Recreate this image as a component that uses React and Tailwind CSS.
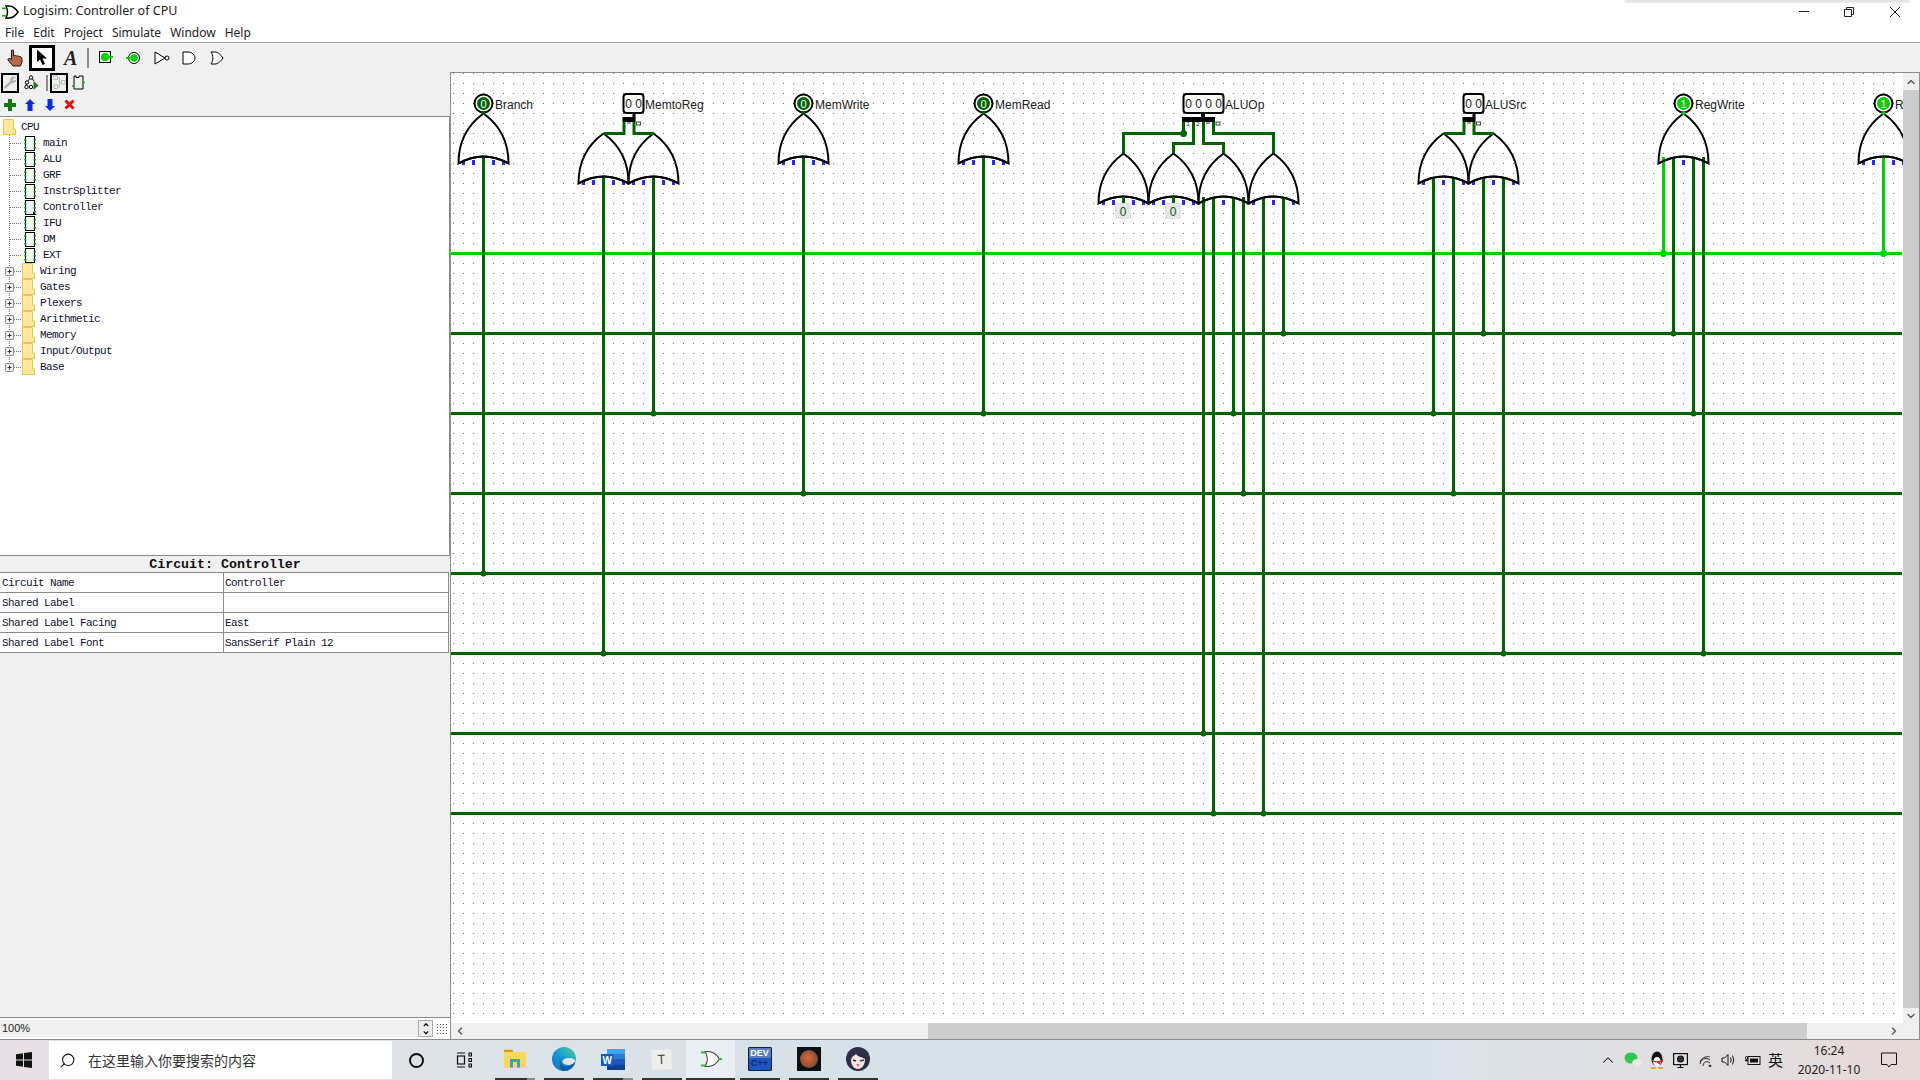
import React from "react";
import { ChevronLeft, ChevronRight, ChevronUp, ChevronDown, Search } from "lucide-react";

const DARK = "#006400";
const BRIGHT = "#00d200";
const BLUE = "#2a2aff";

const menus = ["File", "Edit", "Project", "Simulate", "Window", "Help"];

const tree = [
  { name: "main", kind: "circuit" },
  { name: "ALU", kind: "circuit" },
  { name: "GRF", kind: "circuit" },
  { name: "InstrSplitter", kind: "circuit" },
  { name: "Controller", kind: "current" },
  { name: "IFU", kind: "circuit" },
  { name: "DM", kind: "circuit" },
  { name: "EXT", kind: "circuit" },
  { name: "Wiring", kind: "lib" },
  { name: "Gates", kind: "lib" },
  { name: "Plexers", kind: "lib" },
  { name: "Arithmetic", kind: "lib" },
  { name: "Memory", kind: "lib" },
  { name: "Input/Output", kind: "lib" },
  { name: "Base", kind: "lib" },
];

const attrs = [
  ["Circuit Name", "Controller"],
  ["Shared Label", ""],
  ["Shared Label Facing", "East"],
  ["Shared Label Font", "SansSerif Plain 12"],
];

// circuit geometry, in page pixels
const buses = [333.5, 413.5, 493.5, 573.5, 653.5, 733.5, 813.5];
const LIVE = 253.5;

const drops = [
  [483.5, 157, 573.5],
  [603.5, 177, 653.5],
  [653.5, 177, 413.5],
  [803.5, 157, 493.5],
  [983.5, 157, 413.5],
  [1203.5, 197, 733.5],
  [1213.5, 197, 813.5],
  [1233.5, 197, 413.5],
  [1243.5, 197, 493.5],
  [1263.5, 197, 813.5],
  [1283.5, 197, 333.5],
  [1433.5, 177, 413.5],
  [1453.5, 177, 493.5],
  [1483.5, 177, 333.5],
  [1503.5, 177, 653.5],
  [1673.5, 157, 333.5],
  [1693.5, 157, 413.5],
  [1703.5, 157, 653.5],
];

const liveDrops = [1663.5, 1883.5];

const outputs = [
  { x: 483.5, label: "Branch", value: "0" },
  { x: 803.5, label: "MemWrite", value: "0" },
  { x: 983.5, label: "MemRead", value: "0" },
  { x: 1683.5, label: "RegWrite", value: "1" },
  { x: 1883.5, label: "R", value: "1" },
];

const gates = [
  [483.5, 113.5], [803.5, 113.5], [983.5, 113.5], [1683.5, 113.5], [1883.5, 113.5],
  [603.5, 133.5], [653.5, 133.5], [1443.5, 133.5], [1493.5, 133.5],
  [1123.5, 153.5], [1173.5, 153.5], [1223.5, 153.5], [1273.5, 153.5],
];

const Gate = ({ c, top }) => (
  <g>
    {[-20, -10, 0, 10, 20].map((d) => (
      <rect key={d} x={c + d - 1.5} y={top + 46.5} width="3" height="5" fill={BLUE} />
    ))}
    <path
      d={`M${c} ${top} C${c - 14} ${top + 10} ${c - 25} ${top + 26} ${c - 25} ${top + 50} Q${c} ${top + 36} ${c + 25} ${top + 50} C${c + 25} ${top + 26} ${c + 14} ${top + 10} ${c} ${top}`}
      fill="none"
      stroke="#000"
      strokeWidth="2"
    />
  </g>
);

const OutputPin = ({ x, label, value }) => {
  const color = value === "1" ? BRIGHT : DARK;
  return (
    <g>
      <circle cx={x} cy="103.5" r="9" fill="#fff" stroke="#000" strokeWidth="2" />
      <circle cx={x} cy="103.5" r="6.5" fill={color} />
      <text x={x} y="107.5" textAnchor="middle" fontSize="11" fill="#fff" fontFamily="Liberation Sans">{value}</text>
      <circle cx={x} cy="113" r="2" fill={color} />
      <text x={x + 11.5} y="109" fontSize="12" fill="#222" fontFamily="Liberation Sans">{label}</text>
    </g>
  );
};

const InputPin = ({ x, bits, label }) => (
  <g>
    <rect x={x} y="94" width={bits * 10} height="19" rx="3" fill="#fff" stroke="#000" strokeWidth="2" />
    {Array.from({ length: bits }).map((_, i) => (
      <text key={i} x={x + 5 + i * 10} y="108" textAnchor="middle" fontSize="12" fill="#222" fontFamily="Liberation Sans">0</text>
    ))}
    <text x={x + bits * 10 + 1.5} y="109" fontSize="12" fill="#222" fontFamily="Liberation Sans">{label}</text>
  </g>
);

const TwoBitSplit = ({ x }) => (
  <g>
    <rect x={x - 1} y="117" width="13" height="5" fill="#000" />
    <rect x={x + 9} y="113" width="3" height="5" fill="#000" />
    <path d={`M${x + 0.5} 122 V133.5 H${x - 20} M${x + 10.5} 122 V133.5 H${x + 30.5}`} fill="none" stroke={DARK} strokeWidth="3" />
    <rect x={x + 3.5} y="122.5" width="4" height="1" fill="#444" />
    <rect x={x + 13} y="122" width="4" height="3" fill="#fff" stroke="#444" strokeWidth="1" />
  </g>
);

const Circuit = () => (
  <svg className="block h-full flex-1" viewBox="451 73 1452 950" preserveAspectRatio="xMinYMin slice">
    <defs>
      <pattern id="grid" x="453" y="73" width="10" height="10" patternUnits="userSpaceOnUse">
        <rect x="0" y="0" width="1" height="1" fill="#7a7a7a" />
      </pattern>
    </defs>
    <rect x="451" y="73" width="1452" height="950" fill="#fff" />
    <rect x="451" y="73" width="1452" height="950" fill="url(#grid)" />

    {gates.map(([c, top]) => <Gate key={c} c={c} top={top} />)}

    {buses.map((y) => <rect key={y} x="451" y={y - 1.5} width="1451" height="3" fill={DARK} />)}
    <rect x="451" y={LIVE - 1.5} width="1451" height="3" fill={BRIGHT} />

    {drops.map(([x, y1, y2]) => (
      <g key={x}>
        <rect x={x - 1.5} y={y1} width="3" height={y2 - y1} fill={DARK} />
        <circle cx={x} cy={y2} r="3" fill={DARK} />
      </g>
    ))}
    {liveDrops.map((x) => (
      <g key={x}>
        <rect x={x - 1.5} y="157" width="3" height={LIVE - 157} fill={BRIGHT} />
        <circle cx={x} cy={LIVE} r="3.5" fill={BRIGHT} />
      </g>
    ))}

    {gates.map(([c, top]) => (
      <path
        key={c}
        d={`M${c - 25} ${top + 50} Q${c} ${top + 36} ${c + 25} ${top + 50}`}
        fill="none"
        stroke="#000"
        strokeWidth="2"
      />
    ))}

    {outputs.map((p) => <OutputPin key={p.x} {...p} />)}

    <InputPin x={623.5} bits={2} label="MemtoReg" />
    <TwoBitSplit x={623.5} />
    <InputPin x={1463.5} bits={2} label="ALUSrc" />
    <TwoBitSplit x={1463.5} />

    <InputPin x={1183.5} bits={4} label="ALUOp" />
    <rect x="1182" y="117" width="33" height="5" fill="#000" />
    <rect x="1201" y="113" width="4" height="5" fill="#000" />
    <path
      d="M1183.5 122 V133.5 H1123.5 V153 M1193.5 122 V143.5 H1173.5 V153 M1203.5 122 V143.5 H1223.5 V153 M1213.5 122 V133.5 H1273.5 V153"
      fill="none"
      stroke={DARK}
      strokeWidth="3"
    />
    <circle cx="1183.5" cy="133.5" r="3.5" fill={DARK} />
    {[1188, 1198].map((x, i) => (
      <text key={x} x={x} y="126" textAnchor="middle" fontSize="6" fill="#333" fontFamily="Liberation Sans">{3 - i}</text>
    ))}
    <rect x="1206" y="122.5" width="4" height="1" fill="#444" />
    <rect x="1216" y="122" width="4" height="3" fill="#fff" stroke="#444" strokeWidth="1" />

    {[1123.5, 1173.5].map((c) => (
      <g key={c}>
        <rect x={c - 1.5} y="197" width="3" height="7" fill={DARK} />
        <rect x={c - 8.5} y="203" width="16" height="16" fill="#e6e6e6" />
        <text x={c - 0.5} y="215.5" textAnchor="middle" fontSize="12" fill={DARK} fontFamily="Liberation Sans">0</text>
      </g>
    ))}
  </svg>
);

const LogisimLogo = ({ size = 18 }) => (
  <svg width={size} height={size} viewBox="0 0 18 18">
    <path d="M5 3 H8 C12 3 15 6 17 9 C15 12 12 15 8 15 H5 C7 11 7 7 5 3 Z" fill="#fff" stroke="#000" strokeWidth="1.4" />
    <rect x="1" y="4.5" width="4" height="1.6" fill="#00c000" />
    <rect x="1" y="12" width="4" height="1.6" fill="#00c000" />
  </svg>
);

const HandTool = () => (
  <svg width="16" height="18" viewBox="0 0 16 18">
    <path d="M4.5 1.5 C4.5 0.5 6.5 0.5 6.5 1.5 V7 C7.5 6 9 6.3 9.5 7 C10.5 6.4 11.5 6.8 12 7.6 C13 7.2 15 8 15 9.5 V13 L13.5 17 H6 L1 11 C0.5 9.5 2.5 8.8 4.5 10.5 Z" fill="#b5684a" stroke="#2a1a12" strokeWidth="1" />
  </svg>
);

const ArrowTool = () => (
  <svg width="12" height="17" viewBox="0 0 12 17">
    <path d="M1 0.5 V13 L4 10.5 L6.5 16 L9 15 L6.5 9.5 H11 Z" fill="#000" />
  </svg>
);

const PinIn = () => (
  <svg width="14" height="14" viewBox="0 0 14 14">
    <rect x="0.5" y="0.5" width="11" height="11" fill="#fff" stroke="#000" />
    <circle cx="6" cy="6" r="4" fill="#00d200" />
    <rect x="9" y="5" width="5" height="2" fill="#00d200" />
  </svg>
);

const PinOut = () => (
  <svg width="14" height="14" viewBox="0 0 14 14">
    <circle cx="8" cy="7" r="5.5" fill="#fff" stroke="#000" />
    <circle cx="8" cy="7" r="3.8" fill="#00d200" />
    <rect x="0" y="6" width="4" height="2" fill="#00d200" />
  </svg>
);

const NotGate = () => (
  <svg width="16" height="14" viewBox="0 0 16 14">
    <path d="M1 1 L11 7 L1 13 Z" fill="#fff" stroke="#000" />
    <circle cx="13" cy="7" r="2" fill="#fff" stroke="#000" />
  </svg>
);

const AndGate = () => (
  <svg width="14" height="14" viewBox="0 0 14 14">
    <path d="M1 1 H6 C10 1 13 4 13 7 C13 10 10 13 6 13 H1 Z" fill="#fff" stroke="#000" />
  </svg>
);

const OrGate = () => (
  <svg width="14" height="14" viewBox="0 0 14 14">
    <path d="M1 1 H5 C8 1 11 4 13 7 C11 10 8 13 5 13 H1 C3.5 9.5 3.5 4.5 1 1 Z" fill="#fff" stroke="#000" />
  </svg>
);

const Wrench = () => (
  <svg width="15" height="15" viewBox="0 0 15 15">
    <path d="M14 1.5 L10.5 1 C8 1.5 7 4 7.8 6 L1 12 C0.5 13 2 14.8 3 14 L9.5 8 C12 8.5 14 7 14.5 4 L12 5.5 L10.5 4 Z" fill="#b4b4b4" />
  </svg>
);

const SimTree = () => (
  <svg width="15" height="15" viewBox="0 0 15 15" fill="none">
    <path d="M7 2 L3 7 L2 11 M7 2 L10 6" stroke="#000" />
    <circle cx="7" cy="2.5" r="1.7" fill="#fff" stroke="#000" />
    <circle cx="3" cy="7.5" r="1.7" fill="#fff" stroke="#000" />
    <circle cx="2.5" cy="12" r="1.7" fill="#fff" stroke="#000" />
    <circle cx="7" cy="12" r="1.7" fill="#fff" stroke="#000" />
    <path d="M9.5 6 L14.5 10.5 L9.5 15 Z" fill="#1f7a1f" />
  </svg>
);

const Layout = () => (
  <svg width="13" height="15" viewBox="0 0 13 15" fill="none">
    <rect x="1" y="1" width="3.5" height="3.5" stroke="#bbb" />
    <rect x="1" y="10" width="3.5" height="3.5" stroke="#bbb" />
    <rect x="8.5" y="5.5" width="3.5" height="3.5" stroke="#bbb" />
    <path d="M4.5 3 H6.5 V12 H4.5 M6.5 7 H8.5" stroke="#9c9" />
  </svg>
);

const Appearance = () => (
  <svg width="13" height="15" viewBox="0 0 13 15" fill="none">
    <path d="M2 1 H4 V2.5 H7 V1 H11 V14 H2 Z" stroke="#000" />
    <path d="M0 11 H3 M10 7.5 H13" stroke="#00c000" strokeWidth="1.5" />
  </svg>
);

const Folder = () => (
  <svg width="13" height="16" viewBox="0 0 13 16" className="shrink-0">
    <path d="M0.5 0.5 H10.5 V10 H12.5 V15.5 H0.5 Z" fill="#fde79a" stroke="#e9c450" />
  </svg>
);

const CircuitIcon = ({ current }) => (
  <svg width="13" height="15" viewBox="0 0 13 15" className="shrink-0">
    <rect x="1.5" y="0.5" width="9" height="14" fill={current ? "#eef" : "#fff"} stroke="#000" />
    {[3, 7, 11].map((y) => (
      <g key={y}>
        <rect x="0" y={y} width="2.5" height="1.5" fill="#00c000" />
        <rect x="9.5" y={y} width="2.5" height="1.5" fill="#00a000" />
      </g>
    ))}
    {current && <path d="M9 12 L13 15 H9 Z" fill="#000" />}
  </svg>
);

const TreeGuide = ({ lib, last }) => (
  <svg width="22" height="16" viewBox="0 0 22 16" className="shrink-0" fill="none">
    <path d={`M9.5 0 V${last ? 8 : 16} M10 8.5 H22`} stroke="#777" strokeDasharray="1 1" />
    {lib && (
      <g>
        <rect x="5.5" y="4.5" width="8" height="8" rx="1" fill="#eee" stroke="#888" />
        <path d="M7.5 8.5 H11.5 M9.5 6.5 V10.5" stroke="#334" />
      </g>
    )}
  </svg>
);

const TreeRow = ({ name, kind }) => (
  <div className="flex h-4 items-center">
    <TreeGuide lib={kind === "lib"} last={name === "Base"} />
    {kind === "lib" ? (
      <Folder />
    ) : (
      <span className="ml-[2px] flex items-center"><CircuitIcon current={kind === "current"} /></span>
    )}
    <span className={kind === "lib" ? "ml-[5px]" : "ml-[6px]"}>{name}</span>
  </div>
);

const WinLogo = () => (
  <svg width="16" height="16" viewBox="0 0 16 16" fill="#111">
    <path d="M0 2.3 L7 1.3 V7.5 H0 Z M8 1.1 L16 0 V7.5 H8 Z M0 8.5 H7 V14.7 L0 13.7 Z M8 8.5 H16 V16 L8 14.9 Z" />
  </svg>
);

const TaskView = () => (
  <svg width="16" height="16" viewBox="0 0 16 16" fill="none" stroke="#111" strokeWidth="1.2">
    <path d="M1 1 H9 M1 15 H9" />
    <rect x="1.5" y="4" width="7" height="8" />
    <path d="M13 1 H15.5 V4 H13 Z M13 6.5 H15.5 V9.5 H13 Z M13 12 H15.5 V15 H13 Z" />
  </svg>
);

const Explorer = () => (
  <svg width="22" height="20" viewBox="0 0 22 20">
    <path d="M0 2 C0 1 1 0.5 2 0.5 H8 L10 3 H22 V19 H0 Z" fill="#fbd760" />
    <path d="M0 0.8 H8 L9.5 3 H0 Z" fill="#d69a1a" />
    <path d="M6 18.5 V10 H16 V18.5 H13 V13 H9 V18.5 Z" fill="#3f9be0" />
  </svg>
);

const Edge = () => (
  <svg width="24" height="24" viewBox="0 0 24 24">
    <defs>
      <linearGradient id="edgeA" x1="0" y1="1" x2="1" y2="0">
        <stop offset="0" stopColor="#1565c0" />
        <stop offset="0.55" stopColor="#1ba1d8" />
        <stop offset="1" stopColor="#4fd07a" />
      </linearGradient>
    </defs>
    <circle cx="12" cy="12" r="12" fill="url(#edgeA)" />
    <ellipse cx="17" cy="14.5" rx="6.5" ry="3.6" fill="#dfe6ec" />
    <path d="M10 21 C7 17 8 11 13 10 C9 10 7 14 8 18 C8.5 20 9 21 10 21 Z" fill="#0f5da8" />
    <path d="M9 15 C9 19 14 20 18 18.2 C20 17.5 22 16 23 14.5 C23 19 18 24 12 24 C10 24 8 22 8 19 Z" fill="#0f5da8" />
  </svg>
);

const Word = () => (
  <svg width="24" height="21" viewBox="0 0 24 21">
    <rect x="6" y="0" width="18" height="21" fill="#2b7cd3" />
    <rect x="6" y="0" width="18" height="5" fill="#41a5ee" />
    <rect x="6" y="10" width="18" height="5.5" fill="#185abd" />
    <rect x="6" y="15.5" width="18" height="5.5" fill="#103f91" />
    <rect x="0" y="5" width="12.5" height="12" fill="#185abd" />
    <text x="6.2" y="14.5" textAnchor="middle" fontSize="10" fontWeight="700" fill="#fff" fontFamily="Liberation Sans">W</text>
  </svg>
);

const NoteT = () => (
  <div className="flex h-[19px] w-[19px] rotate-[-3deg] items-center justify-center bg-[#f0eeeb] text-[13px] text-[#444] shadow-[0_0_1px_#fff]">T</div>
);

const LogisimTask = () => (
  <svg width="22" height="18" viewBox="0 0 22 18">
    <path d="M5 1.5 H9 C13 2 17 5 19.5 9 C17 13 13 16 9 16.5 H5 C8 12 8 6 5 1.5 Z" fill="#fff" stroke="#444" strokeWidth="1.2" />
    <rect x="1" y="1.5" width="4.5" height="2" fill="#1fc61f" />
    <rect x="1" y="14.5" width="4.5" height="2" fill="#1fc61f" />
    <rect x="19" y="8" width="3" height="2" fill="#1fc61f" />
  </svg>
);

const DevCpp = () => (
  <div className="flex h-6 w-6 flex-col overflow-hidden rounded-[1px] border border-[#123] bg-[#1f56c4] text-center font-['Liberation_Sans',sans-serif] text-[9px] font-bold leading-[10px]">
    <span className="bg-[#5c7fb8] text-white">DEV</span>
    <span className="text-[#0b2a66]">C++</span>
  </div>
);

const Photo = () => (
  <div className="flex h-6 w-6 items-center justify-center bg-[#0b1014]">
    <div className="h-[18px] w-[18px] rounded-full bg-[radial-gradient(circle_at_45%_45%,#d9683a,#7c4a38_75%,#33424c)]" />
  </div>
);

const Avatar = () => (
  <svg width="24" height="24" viewBox="0 0 24 24">
    <circle cx="12" cy="12" r="12" fill="#2c2f45" />
    <path d="M5 13 C6 9 8 9 10 7 C12 10 16 10 19 12 C19 18 16 22 12 22 C8 22 5 18 5 13 Z" fill="#f5e3dc" />
    <path d="M7 13 L10 14 M14 14 L18 13" stroke="#263a6e" strokeWidth="1.5" />
    <path d="M10 17 H14 L12 20 Z" fill="#e7707a" />
  </svg>
);

const taskItems = [
  { icon: <Explorer />, bar: "explorer" },
  { icon: <Edge /> },
  { icon: <Word />, bar: "word" },
  { icon: <NoteT /> },
  { icon: <LogisimTask />, active: true },
  { icon: <DevCpp /> },
  { icon: <Photo /> },
  { icon: <Avatar /> },
];

const TaskItem = ({ icon, bar, active }) => (
  <div className={`flex h-10 w-[49px] flex-col items-center ${active ? "bg-[#e8eef3]" : ""}`}>
    <div className="flex flex-1 items-center justify-center">{icon}</div>
    <div className={`flex h-[2px] ${active ? "w-[49px]" : "w-10"} bg-[#333]`}>
      {bar && <span className={`ml-auto h-full ${bar === "word" ? "w-[10px]" : "w-2"} bg-[#8a8a8a]`} />}
    </div>
  </div>
);

const Tray = () => (
  <div className="flex items-center">
    <ChevronUp size={18} strokeWidth={1.4} className="text-[#222]" />
    <svg className="ml-[7px]" width="18" height="16" viewBox="0 0 18 16">
      <ellipse cx="7" cy="6" rx="6.5" ry="5.5" fill="#2dc84d" />
      <ellipse cx="13" cy="11" rx="4.8" ry="4" fill="#e9e9e9" />
    </svg>
    <svg className="ml-[7px]" width="16" height="18" viewBox="0 0 16 18">
      <ellipse cx="8" cy="8" rx="5.5" ry="7.5" fill="#111" />
      <ellipse cx="8" cy="11" rx="3.8" ry="5" fill="#fff" />
      <path d="M2 8.5 Q8 12 14 8.5 L14 11 L11 10.8 L11.5 14 L8 11.5 Q4 11 2 8.5 Z" fill="#d8232a" />
      <ellipse cx="4.5" cy="17" rx="3" ry="1" fill="#f0a020" />
      <ellipse cx="11.5" cy="17" rx="3" ry="1" fill="#f0a020" />
    </svg>
    <svg className="ml-[8px]" width="15" height="15" viewBox="0 0 15 15" fill="none" stroke="#111" strokeWidth="1.2">
      <rect x="0.6" y="0.6" width="13.8" height="11" />
      <circle cx="7.5" cy="6" r="3" fill="#333" />
      <path d="M7.5 12 V14.5 M4.5 14.5 H10.5" />
    </svg>
    <svg className="ml-[11px]" width="13" height="13" viewBox="0 0 13 13" fill="none" stroke="#333" strokeWidth="1">
      <path d="M1 8 A8 8 0 0 1 11 3 M1 10 A6 6 0 0 1 11 6 M4 12 A4 4 0 0 1 11 9" />
      <circle cx="11" cy="12" r="1" fill="#333" />
    </svg>
    <svg className="ml-[9px]" width="16" height="14" viewBox="0 0 16 14" fill="none" stroke="#111">
      <path d="M1 5 H3.5 L7 1.5 V12.5 L3.5 9 H1 Z M9.5 4.5 Q11 7 9.5 9.5 M11.5 2.5 Q14 7 11.5 11.5" />
    </svg>
    <svg className="ml-[8px]" width="16" height="11" viewBox="0 0 16 11">
      <rect x="3" y="1.5" width="12" height="8" fill="none" stroke="#111" />
      <rect x="5" y="3.5" width="8" height="4" fill="#111" />
      <path d="M0 5.5 H3" stroke="#111" strokeWidth="1.5" />
      <circle cx="1.5" cy="3" r="1.4" fill="none" stroke="#111" />
    </svg>
    <span className="ml-[7px] font-['Noto_Sans_CJK_SC',sans-serif] text-[15px] text-[#111]">英</span>
  </div>
);

const App = () => {
  return (
    <div className="relative flex h-[1080px] w-[1920px] flex-col overflow-hidden bg-white font-['Noto_Sans','Noto_Sans_CJK_SC',sans-serif] text-black">
      {/* title bar */}
      <div className="flex h-[23px] items-center pl-[1px]">
        <LogisimLogo />
        <span className="ml-[4px] text-[12.5px] text-[#222]">Logisim: Controller of CPU</span>
        <div className="ml-auto flex items-center text-[#222]">
          <span className="h-[1px] w-[10px] bg-[#222]" />
          <svg className="ml-[35px]" width="10" height="10" viewBox="0 0 10 10" fill="none" stroke="#222">
            <path d="M2.5 2.5 V0.5 H9.5 V7.5 H7.5 M0.5 2.5 H7.5 V9.5 H0.5 Z" />
          </svg>
          <svg className="ml-[36px] mr-[20px]" width="10" height="10" viewBox="0 0 10 10" fill="none" stroke="#222">
            <path d="M0 0 L10 10 M10 0 L0 10" />
          </svg>
        </div>
      </div>

      {/* menu */}
      <div className="flex h-[20px] items-center gap-[9px] border-b border-[#a0a0a0] px-[5px] text-[12px] text-[#222]">
        {menus.map((m) => <span key={m}>{m}</span>)}
      </div>

      {/* main toolbar */}
      <div className="flex h-[29px] items-center bg-[#f0f0f0] pl-[7px]">
        <HandTool />
        <div className="ml-[6px] flex h-[26px] w-[26px] items-center justify-center border-[3px] border-black bg-white"><ArrowTool /></div>
        <span className="ml-[9px] font-['Liberation_Serif',serif] text-[20px] font-bold italic leading-none text-[#222]">A</span>
        <span className="ml-[10px] h-[20px] w-[2px] bg-[#8c8c8c]" />
        <span className="ml-[10px]"><PinIn /></span>
        <span className="ml-[13px]"><PinOut /></span>
        <span className="ml-[14px]"><NotGate /></span>
        <span className="ml-[12px]"><AndGate /></span>
        <span className="ml-[14px]"><OrGate /></span>
      </div>

      <div className="flex min-h-0 flex-1 border-b border-[#8c8c8c]">
        {/* left panel */}
        <div className="flex w-[450px] shrink-0 flex-col bg-[#f0f0f0]">
          <div className="flex h-[21px] items-center pl-[1px]">
            <div className="flex h-[20px] w-[18px] items-center justify-center border-[2px] border-black"><Wrench /></div>
            <span className="ml-[5px]"><SimTree /></span>
            <span className="ml-[7px] h-[16px] w-[2px] bg-[#8c8c8c]" />
            <div className="ml-[2px] flex h-[20px] w-[18px] items-center justify-center border-[2px] border-black"><Layout /></div>
            <span className="ml-[4px]"><Appearance /></span>
          </div>
          <div className="flex h-[23px] items-center pl-[4px]">
            <svg width="12" height="12" viewBox="0 0 12 12"><path d="M4 0 H8 V4 H12 V8 H8 V12 H4 V8 H0 V4 H4 Z" fill="#0f7a0f" /></svg>
            <svg className="ml-[9px]" width="10" height="12" viewBox="0 0 10 12"><path d="M5 0 L10 5 H7.5 V12 H2.5 V5 H0 Z" fill="#0a2ce0" /></svg>
            <svg className="ml-[10px]" width="10" height="12" viewBox="0 0 10 12"><path d="M5 12 L10 7 H7.5 V0 H2.5 V7 H0 Z" fill="#0a2ce0" /></svg>
            <svg className="ml-[9px]" width="11" height="11" viewBox="0 0 11 11"><path d="M1.5 1.5 L9.5 9.5 M9.5 1.5 L1.5 9.5" stroke="#e01010" strokeWidth="3" /></svg>
          </div>

          {/* project tree */}
          <div className="h-[440px] border-y border-r border-[#8c8c8c] bg-white pt-[2px] font-['Liberation_Mono',monospace] text-[11px] tracking-[-0.6px] text-[#101030]">
            <div className="flex h-4 items-center pl-[3px]">
              <Folder />
              <span className="ml-[5px]">CPU</span>
            </div>
            {tree.map((row) => <TreeRow key={row.name} {...row} />)}
          </div>

          {/* attributes */}
          <div className="flex h-[16px] items-center justify-center pt-[2px] font-['Liberation_Mono',monospace] text-[13.3px] font-bold text-[#111]">
            Circuit: Controller
          </div>
          <div className="w-[449px] border-t border-[#8c8c8c] font-['Liberation_Mono',monospace] text-[11px] tracking-[-0.6px] text-[#101030]">
            {attrs.map(([k, v]) => (
              <div key={k} className="flex h-[20px] items-center border-b border-r border-[#8c8c8c] bg-white">
                <span className="flex h-full w-[224px] items-center border-r border-[#8c8c8c] pl-[2px] pt-[2px]">{k}</span>
                <span className="pl-[1px] pt-[2px]">{v}</span>
              </div>
            ))}
          </div>
          <div className="flex-1 border-b border-[#8c8c8c]" />

          {/* zoom */}
          <div className="flex h-[21px] items-center bg-white py-[2px]">
            <div className="flex h-full w-[418px] items-center bg-[#f0f0f0] pl-[2px] font-['Liberation_Sans',sans-serif] text-[11px] text-[#222]">100%</div>
            <div className="flex h-full w-[15px] flex-col border border-[#aaa] bg-[#eee] text-[#111]">
              <ChevronUp size={8} strokeWidth={4} className="mx-auto flex-1" />
              <ChevronDown size={8} strokeWidth={4} className="mx-auto flex-1" />
            </div>
            <div className="ml-[4px] grid grid-cols-4 gap-[2px]">
              {Array.from({ length: 16 }).map((_, i) => <span key={i} className="h-[1px] w-[1px] bg-[#555]" />)}
            </div>
          </div>
        </div>

        {/* canvas and scrollbars */}
        <div className="flex min-w-0 flex-1 flex-col border-l border-t border-[#8c8c8c] bg-[#f0f0f0]">
          <div className="flex h-[950px]">
            <div className="flex flex-1 overflow-hidden"><Circuit /></div>
            <div className="flex w-[17px] flex-col border-r border-[#8c8c8c] bg-[#f0f0f0] text-[#606060]">
              <div className="flex h-[17px] items-center justify-center"><ChevronUp size={12} strokeWidth={3} /></div>
              <div className="flex-1 bg-[#cdcdcd]" />
              <div className="flex h-[15px] items-center justify-center"><ChevronDown size={12} strokeWidth={3} /></div>
            </div>
          </div>
          <div className="flex h-[16px] items-center border-r border-[#8c8c8c] text-[#606060]">
            <ChevronLeft size={12} strokeWidth={3} className="ml-[3px] shrink-0" />
            <div className="ml-[462px] h-full w-[879px] bg-[#cdcdcd]" />
            <ChevronRight size={12} strokeWidth={3} className="ml-auto mr-[19px] shrink-0" />
          </div>
        </div>
      </div>

      {/* taskbar */}
      <div className="flex h-10 items-center bg-[linear-gradient(90deg,#e7dfe3_0%,#dde3e8_25%,#d6e0e8_50%,#dbe3ea_75%,#e6d9d8_100%)]">
        <div className="flex w-[47px] justify-center"><WinLogo /></div>
        <div className="ml-[2px] flex h-[38px] w-[343px] items-center bg-white pl-[10px] font-['Noto_Sans_CJK_SC',sans-serif] text-[14px] text-[#333]">
          <Search size={17} strokeWidth={1.5} className="-scale-x-100 text-[#111]" />
          <span className="ml-[12px]">在这里输入你要搜索的内容</span>
        </div>
        <div className="flex w-[49px] justify-center">
          <span className="h-[15px] w-[15px] rounded-full border-[2.5px] border-[#111]" />
        </div>
        <div className="flex w-[46px] justify-center"><TaskView /></div>
        <div className="w-[3px]" />
        {taskItems.map((t, i) => <TaskItem key={i} {...t} />)}
        <div className="ml-[717px]"><Tray /></div>
        <div className="ml-[11px] flex w-[70px] flex-col items-center text-[12px] leading-[19px] text-[#222]">
          <span>16:24</span>
          <span>2020-11-10</span>
        </div>
        <svg className="ml-[17px]" width="16" height="16" viewBox="0 0 16 16" fill="none" stroke="#111">
          <path d="M0.5 1 H15.5 V12.5 H10 L8 15 L6 12.5 H0.5 Z" />
        </svg>
      </div>

      {/* shadow of a window above, top right */}
      <div className="absolute right-[10px] top-0 h-[2px] w-[285px] bg-[#cfcfcf] blur-[1px]" />
    </div>
  );
};

export default App;
